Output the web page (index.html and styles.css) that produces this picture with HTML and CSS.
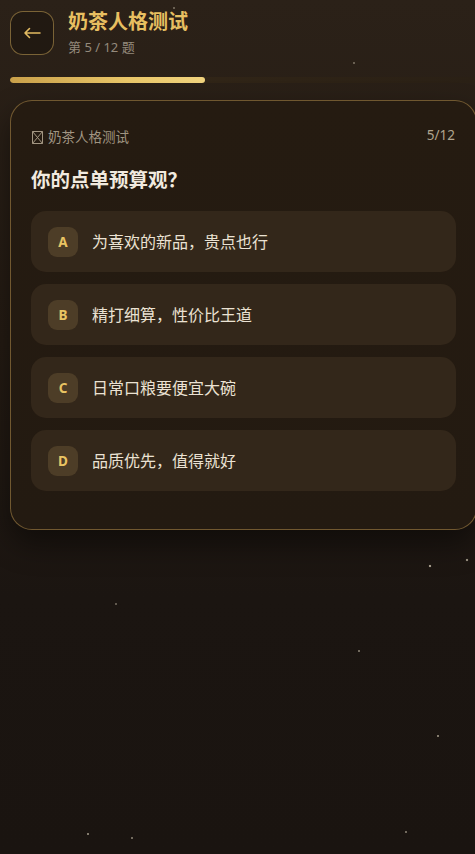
FILE: index.html
```html
<!DOCTYPE html>
<html lang="zh">
<head>
<meta charset="utf-8">
<title>奶茶人格测试</title>
<link rel="stylesheet" href="styles.css">
</head>
<body>
<div class="page">
  <header class="top">
    <button class="back" aria-label="返回">
      <svg width="18" height="12" viewBox="0 0 18 12"><path d="M17 6H2M6.5 1.5L2 6l4.5 4.5" fill="none" stroke="#e2bb62" stroke-width="1.6" stroke-linecap="round" stroke-linejoin="round"/></svg>
    </button>
    <div class="titles">
      <h1 class="title">奶茶人格测试</h1>
      <div class="sub">第 5 / 12 题</div>
    </div>
  </header>
  <div class="track"><div class="fill" style="width:41.67%"></div></div>
  <section class="card">
    <div class="card-head">
      <span class="tag"><svg class="tofu" width="11" height="13" viewBox="0 0 11 13"><path d="M0.5 0.5h10v12h-10zM0.5 0.5l10 12M10.5 0.5l-10 12" fill="none" stroke="#a39682" stroke-width="1"/></svg>奶茶人格测试</span>
      <span class="count">5/12</span>
    </div>
    <h2 class="question">你的点单预算观？</h2>
    <div class="options">
      <div class="option"><span class="badge">A</span><span class="text">为喜欢的新品，贵点也行</span></div>
      <div class="option"><span class="badge">B</span><span class="text">精打细算，性价比王道</span></div>
      <div class="option"><span class="badge">C</span><span class="text">日常口粮要便宜大碗</span></div>
      <div class="option"><span class="badge">D</span><span class="text">品质优先，值得就好</span></div>
    </div>
  </section>
</div>
</body>
</html>
```
FILE: styles.css
```css
html, body {
  margin: 0;
  padding: 0;
}
body {
  width: 475px;
  height: 854px;
  overflow: hidden;
  font-family: "Noto Sans", "Noto Sans CJK SC", sans-serif;
  background-color: #1b1410;
  background-image:
    radial-gradient(circle, rgba(200,190,170,0.8) 1.2px, transparent 1.6px),
    radial-gradient(circle, rgba(200,190,170,0.7) 1.2px, transparent 1.6px),
    radial-gradient(circle, rgba(200,190,170,0.5) 1px, transparent 1.4px),
    radial-gradient(circle, rgba(200,190,170,0.6) 1px, transparent 1.4px),
    radial-gradient(circle, rgba(200,190,170,0.5) 1px, transparent 1.4px),
    radial-gradient(circle, rgba(200,190,170,0.6) 1px, transparent 1.4px),
    radial-gradient(circle, rgba(200,190,170,0.5) 1px, transparent 1.4px),
    radial-gradient(circle, rgba(200,190,170,0.4) 1px, transparent 1.4px),
    radial-gradient(circle, rgba(200,190,170,0.4) 1px, transparent 1.4px),
    radial-gradient(circle, rgba(200,190,170,0.4) 1px, transparent 1.4px),
    linear-gradient(180deg, #2b2118 0%, #241b13 40%, #1b1511 70%, #1a1410 100%);
  background-size: 6px 6px, 6px 6px, 6px 6px, 6px 6px, 6px 6px, 6px 6px, 6px 6px, 6px 6px, 6px 6px, 6px 6px, 100% 100%;
  background-repeat: no-repeat;
  background-position: 427px 563px, 464px 557px, 356px 648px, 435px 733px, 403px 829px, 85px 831px, 129px 835px, 113px 601px, 171px 5px, 351px 60px, 0 0;
}
.page {
  width: 467px;
  padding: 11px 0 0 10px;
}
.top {
  display: flex;
  align-items: flex-start;
  gap: 14px;
}
.back {
  width: 44px;
  height: 44px;
  box-sizing: border-box;
  border: 1px solid rgba(196, 160, 86, 0.55);
  border-radius: 13px;
  background: rgba(24, 18, 12, 0.5);
  display: flex;
  align-items: center;
  justify-content: center;
  padding: 0;
  flex: none;
}
.titles {
  display: flex;
  flex-direction: column;
}
.title {
  margin: 0;
  font-size: 20px;
  line-height: 22px;
  font-weight: 700;
  color: #e7bf61;
}
.sub {
  margin-top: 6px;
  font-size: 13px;
  line-height: 16px;
  color: #948a7c;
}
.track {
  margin-top: 22px;
  height: 6px;
  border-radius: 3px;
  background: linear-gradient(90deg, #36291a, #2e2316 60%, #2a2015);
  overflow: hidden;
}
.fill {
  height: 100%;
  border-radius: 3px;
  background: linear-gradient(90deg, #c9a04a, #e9c669 60%, #f0d37e);
}
.card {
  margin-top: 17px;
  box-sizing: border-box;
  height: 430px;
  border: 1px solid rgba(190, 150, 80, 0.5);
  border-radius: 22px;
  background: linear-gradient(180deg, #251b11 0%, #231a11 100%);
  box-shadow: 0 14px 30px rgba(0, 0, 0, 0.45);
  padding: 27px 20px 30px 20px;
}
.card-head {
  display: flex;
  justify-content: space-between;
  align-items: center;
  font-size: 13.5px;
  line-height: 18px;
  color: #a09582;
}
.tag {
  display: flex;
  align-items: center;
  gap: 5px;
  margin-left: 1px;
}
.count {
  margin-right: 1px;
  margin-top: -4px;
  color: #b0a48e;
}
.question {
  margin: 21px 0 0 0;
  font-size: 19.5px;
  line-height: 26px;
  font-weight: 700;
  color: #f1eadf;
}
.options {
  margin-top: 18px;
  display: flex;
  flex-direction: column;
  gap: 12px;
}
.option {
  height: 61px;
  box-sizing: border-box;
  border-radius: 15px;
  background: #33271a;
  display: flex;
  align-items: center;
  padding-left: 17px;
  gap: 14px;
}
.badge {
  width: 30px;
  height: 30px;
  border-radius: 9px;
  background: #4d3d27;
  color: #e9c463;
  font-size: 13.5px;
  font-weight: 700;
  display: flex;
  align-items: center;
  justify-content: center;
  font-family: "Noto Sans", "Inter", sans-serif;
}
.text {
  font-size: 16px;
  color: #ebe2d3;
  line-height: 20px;
}
```
